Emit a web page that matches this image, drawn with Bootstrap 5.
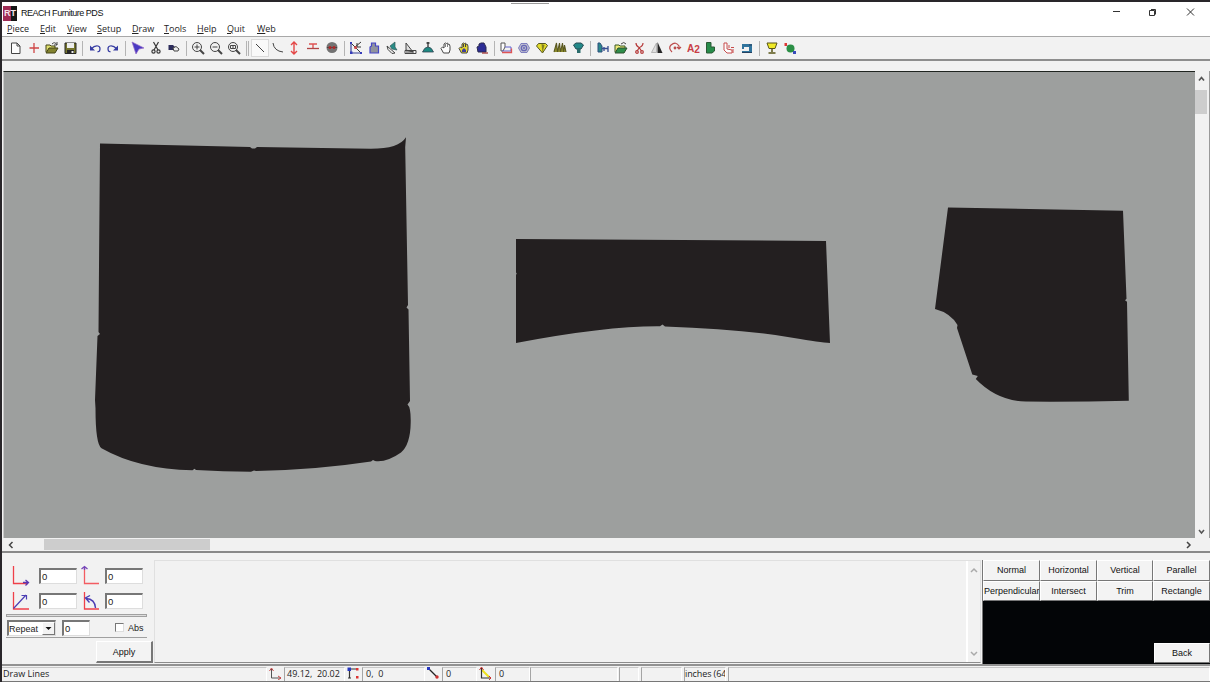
<!DOCTYPE html>
<html lang="en">
<head>
<meta charset="utf-8">
<title>REACH Furniture PDS</title>
<link href="https://cdn.jsdelivr.net/npm/bootstrap@5.3.0/dist/css/bootstrap.min.css" rel="stylesheet">
<style>
body{width:1210px;height:682px;overflow:hidden;background:#f2f2f2;font-family:"Liberation Sans",Arial,sans-serif;font-size:9px;line-height:12px;color:#222;white-space:nowrap}
svg{display:block;flex:none}
.app{height:682px;border-top:2px solid #29262a;border-left:2px solid #29262a}
.titlebar{height:21px;background:#fff;color:#111}
.logo{width:14px;height:15px;margin:2px 0 0 1px;background:linear-gradient(90deg,#a02c55 55%,#151515 55%);color:#f3e4ea;font:bold 9px/15px "Liberation Sans",sans-serif;text-align:center}
.app-name{font-size:9px;letter-spacing:-.48px;margin:1px 0 0 4px}
.menus{height:13px;background:#fff;font:9px/12px "Open Sans","Noto Sans",sans-serif;padding-left:5px;color:#252525}
.menus a{color:inherit;text-decoration:none}
.menus a::first-letter{text-decoration:underline}
.tools{height:25px;border-top:1px solid #a8a8a8;border-bottom:2px solid #8e8e8e;background:#f2f2f2;padding-left:5px}
.tools>svg{opacity:.9}
.sep::before{content:"";display:block;width:1px;height:15px;background:#b4b4b4;margin:auto}
.sep{flex:none}.w6{width:6px}.w7{width:7px}.w8{width:8px}
.w8::before{width:3px;border-left:1px solid #b4b4b4;border-right:1px solid #b4b4b4;background:none}
.down{background:#fafafa;outline:1px solid #d8d8d8;outline-offset:-1px}
.strip{height:10px}
.work{height:467px}
.canvas-box{width:1192px;margin-left:1px;border-top:1px solid #1f2420;background:#9d9f9e;border-left:1px solid #c9c9c9}
.vbar{width:15px;background:#f1f1f1;border-right:1px solid #999}
.vthumb{width:12px;height:24px;background:#cdcdcd;margin-top:1px}
.hbar{height:15px;border-bottom:2px solid #898989;background:#f1f1f1}
.hthumb{width:166px;height:11px;background:#cdcdcd}
.bottom{height:111px;padding-top:7px}
.coord{width:151px;padding-left:4px}
.field{height:16px;background:#fff;border:1px solid #ddd;border-top:2px solid #777;border-left:2px solid #777;padding-left:1px;font-size:9.5px;line-height:14px;width:38px}
.rule{height:3px;border:1px solid #a0a0a0;background:#ddd;width:141px}
.btn.face{border:1px solid #fff;border-right:1px solid #777;border-bottom:1px solid #777;border-radius:0;background:#f3f3f3;color:#111;font:9px/12px "Liberation Sans",sans-serif;padding:0;overflow:hidden}
.btn.apply{width:57px;height:22px;border-right:2px solid #777;border-bottom:2px solid #777}
.output{width:827px;height:103px;border:1px solid #e0e0e0;border-bottom:1px solid #8c8c8c;margin-left:1px}
.cmds{width:228px;height:104px;background:#030507;border-left:1px solid #777;margin-left:1px}
.cmds .face{width:57px;height:20.5px}
.cmds .back{width:56px;margin:auto 0 1px auto}
.cmds .grid4{display:grid;grid-template-columns:57px 57px 56px 57px}
.status{height:18px;border-top:2px solid #929292;border-bottom:1px solid #777;font:9px/12px "Open Sans","Noto Sans",sans-serif}
.pane{height:14px;border-left:1px solid #a5a5a5;border-top:1px solid #c8c8c8;border-right:1px solid #fff;overflow:hidden;flex:none;margin-top:1px;white-space:pre}
</style>
<script src="https://cdn.jsdelivr.net/npm/bootstrap@5.3.0/dist/js/bootstrap.bundle.min.js"></script>
</head>
<body>
<div class="app d-flex flex-column position-relative">
 <div class="position-absolute" style="left:509px;top:0;width:38px;height:2px;background:#fff;border-bottom:1px solid #999"></div>
 <header class="titlebar d-flex align-items-center flex-shrink-0">
  <div class="logo">RT</div><div class="app-name">REACH Furniture PDS</div>
  <svg class="ms-auto" width="100" height="20" fill="none" stroke="#333"><path d="M3 8.500h7"/><path d="M39.500 7.500h5v5h-5zM41 6.500h4.500v5"/><path d="M77 5.500l7 7M84 5.500l-7 7"/></svg>
 </header>
 <nav class="menus d-flex flex-shrink-0">
  <a class="d-block" style="width:33px">Piece</a><a class="d-block" style="width:27px">Edit</a><a class="d-block" style="width:30px">View</a><a class="d-block" style="width:35px">Setup</a><a class="d-block" style="width:32px">Draw</a><a class="d-block" style="width:33px">Tools</a><a class="d-block" style="width:30px">Help</a><a class="d-block" style="width:30px">Quit</a><a class="d-block">Web</a>
 </nav>
 <div class="tools d-flex align-items-center flex-shrink-0">
  <svg width="18" height="18"><path d="M4.500 4h5.500l3 3v7.500H4.500z" fill="#fff" stroke="#333"/><path d="M10 4v3h3" fill="none" stroke="#333"/></svg>
  <svg width="18" height="18"><path d="M9 4v10M4.500 9h9.500" stroke="#c33" stroke-width="1.300"/></svg>
  <svg width="18" height="18"><path d="M3 13V6h4l1 1h4v3" fill="#dede60" stroke="#333300"/><path d="M3 14l3-5h9l-3 5z" fill="#77771a" stroke="#333300"/><path d="M9 5q3-3 5 1M14 3v3h-3" fill="none" stroke="#333"/></svg>
  <svg width="18" height="18"><path d="M4 4h11v10.500H4z" fill="#686817" stroke="#111"/><path d="M6 4h7v5H6z" fill="#eee"/><path d="M6 11h7v4H6z" fill="#111"/><path d="M10.500 12h2v2h-2z" fill="#eee"/></svg>
  <i class="sep w7"></i>
  <svg width="18" height="18"><path d="M5 10q4-4 7-3 3 1 1.500 5l-2 1" fill="none" stroke="#22289a" stroke-width="1.300"/><path d="M4 6.500v5h5z" fill="#22289a"/></svg>
  <svg width="18" height="18"><path d="M13 10q-4-4-7-3-3 1-1.500 5l2 1" fill="none" stroke="#22289a" stroke-width="1.300"/><path d="M14 6.500v5H9z" fill="#22289a"/></svg>
  <i class="sep w7"></i>
  <svg width="18" height="18"><path d="M3 3l12 6-5 1-3 5z" fill="#3827bd" stroke="#8b5bc4" stroke-width=".7"/></svg>
  <svg width="18" height="18" fill="none" stroke="#252525" stroke-width="1.200"><path d="M6.500 3l4.500 8M11.500 3L7 11"/><circle cx="6.500" cy="12.500" r="1.600"/><circle cx="11.500" cy="12.500" r="1.600"/></svg>
  <svg width="18" height="18"><path d="M3.500 6H8l2 2v3H3.500z" fill="#17174b"/><path d="M8 9l3-1.500 3 2.500-1 2H9z" fill="#eee" stroke="#333"/></svg>
  <i class="sep w6"></i>
  <svg width="18" height="18" fill="none" stroke="#333"><circle cx="8" cy="8" r="4.500"/><path d="M5.500 8h5M8 5.500v5"/><path d="M11 11l4 4" stroke-width="2"/></svg>
  <svg width="18" height="18" fill="none" stroke="#333"><circle cx="8" cy="8" r="4.500"/><path d="M5.500 8h5"/><path d="M11 11l4 4" stroke-width="2"/></svg>
  <svg width="18" height="18" fill="none" stroke="#333"><circle cx="8" cy="8" r="4.500"/><path d="M5.500 6.500h5v3h-5zM7 8h2"/><path d="M11 11l4 4" stroke-width="2"/></svg>
  <i class="sep w8"></i>
  <svg class="down" width="18" height="18"><path d="M5 5l8 8" stroke="#333"/></svg>
  <svg width="18" height="18"><path d="M4 4q1 8 10 9" fill="none" stroke="#333"/></svg>
  <svg width="18" height="18" fill="none" stroke="#e33535" stroke-width="1.400"><path d="M7 3v12M4 6l3-3 3 3M4 12l3 3 3-3"/></svg>
  <svg width="18" height="18" fill="none"><path d="M4 5h8M8 5v4" stroke="#d44" stroke-width="1.400"/><path d="M2 9.500h12" stroke="#a33" stroke-width="1.300"/></svg>
  <svg width="18" height="18"><circle cx="9" cy="8.500" r="5.500" fill="#666"/><path d="M4 8.500h10" stroke="#333"/><circle cx="7" cy="8.500" r="1.500" fill="#a11"/><circle cx="11" cy="8.500" r="1.500" fill="#a11"/></svg>
  <i class="sep w6"></i>
  <svg width="18" height="18" fill="none"><path d="M4 3v11h11" stroke="#27318e" stroke-width="1.200"/><path d="M4 4l10 10M8 8l6-5M10 4v4h4" stroke="#222"/><circle cx="8.500" cy="8.500" r="1.500" fill="#c33"/><path d="M3 12.500h2.500V15H3zM13 13h2v2h-2zM3 3h2v2H3z" fill="#2229b5"/></svg>
  <svg width="18" height="18"><path d="M5 14V8l1.500-1V4h4v3h3v7z" fill="#868996" stroke="#3434c2" stroke-width="1.200"/></svg>
  <svg width="18" height="18"><path d="M4 7l8 7-3 .5-4-4z" fill="#eee" stroke="#333"/><path d="M7 7l5-4v5l2 3-5-1z" fill="#13827c" stroke="#204b49" stroke-width=".7"/></svg>
  <svg width="18" height="18" fill="none" stroke="#333"><path d="M5 4v7l7 2z" fill="#ddd"/><path d="M4 11.500h11v3H4zM6 12v2M8 12v2M10 12v2M12 12v2"/></svg>
  <svg width="18" height="18"><path d="M3.500 13q2-5 5.500-5t5.500 5z" fill="#087f76" stroke="#234" stroke-width=".8"/><path d="M9 3v5M7.500 4h3" stroke="#222" stroke-width="1.300"/></svg>
  <svg width="18" height="18"><path d="M6.500 14L4 9.500 5.500 8 7 9V5l1.500-1 1 .5 1-.5 1 1.500h1l.5 2V11L12 14z" fill="#fff" stroke="#333"/><path d="M8.500 5v3M10.500 5v3" stroke="#777"/></svg>
  <svg width="18" height="18"><path d="M6.500 14L4 9.500 5.500 8 7 9V5l1.500-1 1 .5 1-.5 1 1.500h1l.5 2V11L12 14z" fill="#e3d51b" stroke="#333"/><path d="M8.500 5v3M10.500 5v3" stroke="#333"/><path d="M7 11l2-2 2 2v2H7z" fill="#2b2b92"/></svg>
  <svg width="18" height="18"><path d="M5 13l-1-5 2-1V5l2-1h3l2 4v5z" fill="#17178c" stroke="#15153f"/><path d="M9 14h6" stroke="#922" stroke-width="1.300"/></svg>
  <i class="sep w6"></i>
  <svg width="18" height="18"><path d="M4 4h4v4L6 12H4z" fill="#fff" stroke="#444"/><path d="M8 8h6v4H5" stroke="#55c" fill="none"/><path d="M5 13.500h9.500v-4" fill="none" stroke="#d44" stroke-width="1.300"/></svg>
  <svg width="18" height="18" fill="none" stroke="#5a5ab0"><path d="M6 4.500h6l2.500 4.500-2.500 4.500H6L3.500 9z" fill="#bbc" stroke-width=".8"/><circle cx="9" cy="9" r="2.700" stroke-width="1.300"/><circle cx="9" cy="9" r=".8"/></svg>
  <svg width="18" height="18"><path d="M3.500 7l2-2.500h7l2 2L9.500 14z" fill="#e1d916" stroke="#45450e"/><path d="M8.500 5l1 9 2-8z" fill="#77750b"/></svg>
  <svg width="18" height="18"><path d="M3 13l2.500-9 1 9 2-9 1 9 2-9 1 9 1-7 1.500 7" fill="#85851a" stroke="#4a480c" stroke-width="1.100"/></svg>
  <svg width="18" height="18"><path d="M4.500 6l2.500-2h5l2.500 2L12 10H7z" fill="#0c7d7d" stroke="#143d45"/><path d="M8 10h3.500v4H8z" fill="#165e5e"/></svg>
  <i class="sep w7"></i>
  <svg width="18" height="18"><path d="M4 4h2l2 3v6H4z" fill="#167d80" stroke="#193e70"/><path d="M8 9.500h6M10 8v4M14 7v6" stroke="#223b86" stroke-width="1.300"/></svg>
  <svg width="18" height="18"><path d="M3 13V6h4l1 1h5v3" fill="#eee96a" stroke="#294b11"/><path d="M3 14l3-5h9l-3 5z" fill="#19843a" stroke="#193e18"/><path d="M9 5q3-3 5 0" fill="none" stroke="#333"/></svg>
  <svg width="18" height="18" fill="none" stroke="#b02626" stroke-width="1.200"><path d="M6 4q0 3 3 4.500L11.500 12M13 4q0 3-3.500 4.500L7 12"/><circle cx="7" cy="13" r="1.300"/><circle cx="12" cy="13" r="1.300"/></svg>
  <svg width="18" height="18"><path d="M8.500 4v9.500h-5z" fill="#ddd" stroke="#999" stroke-width=".7"/><path d="M9.500 3v11h5z" fill="#111"/></svg>
  <svg width="18" height="18" fill="none" stroke="#b63737" stroke-width="1.200"><path d="M6 13Q2 9 5 6q5-4 8 1v3M11 8l2 2 2-2"/><circle cx="9" cy="9" r=".8" fill="#222"/></svg>
  <svg width="18" height="18"><text x="3" y="12.500" font-size="11" font-weight="bold" fill="#c52b32" textLength="13" lengthAdjust="spacingAndGlyphs">A<tspan dy="1.5">2</tspan></text></svg>
  <svg width="18" height="18"><path d="M4.500 3.500H9V8h3.500v4L10 14H4.500z" fill="#128238" stroke="#174921"/></svg>
  <svg width="18" height="18" fill="none" stroke="#c23b3b"><path d="M4 4h3v6l5 1v3H7l-3-3z" fill="#fff"/><path d="M9 6v3M11 8.500h3M13 10v4"/></svg>
  <svg width="18" height="18"><path d="M4 5h10v8H4v-1h7V8H6v2H4z" fill="#1c6794"/><path d="M4 13.500h10M11 6h3" stroke="#112e51"/></svg>
  <i class="sep w7"></i>
  <svg width="18" height="18"><path d="M4 4h10l-2 5.500H6z" fill="#efe912" stroke="#484500"/><path d="M9 10v3M5.500 14h7" stroke="#484500" stroke-width="1.500"/></svg>
  <svg width="18" height="18"><path d="M4 5l10 9" stroke="#222"/><circle cx="9.500" cy="9.500" r="4" fill="#168534"/><path d="M3.500 4H6v3H3.500z" fill="#d22"/><path d="M12 12h3v3h-3z" fill="#243bb6"/></svg>
 </div>
 <div class="strip flex-shrink-0"></div>
 <main class="work d-flex flex-shrink-0">
  <div class="canvas-box flex-shrink-0">
   <svg width="1191" height="466" viewBox="4 72 1191 466" fill="#231f20">
    <path d="M100 143.500L250 147l2 1.500h3l2-1.500 114 1.800q28 0 35-11.500l-.8 10L408 305l-1.500 2.500 2 2L410 401l-2.500 3.500q3.500 3 3.200 18-.3 22-9.700 30-14 10-26 8.500l-2-1-2 1.500Q315 470 256 471l-2-.5-3 1.200q-28 0-55-1.700l-1.500-1.200-2 1.500q-54-1-91-22-6-4-6-40L95 400l2.500-64 2.500-2-1.500-2 .5-65z"/>
    <path d="M516 239l310 2 4 102q-10-.5-36-5-52-9-129-11.500l-2.500-2-2.500 1.800q-53-.5-144 16.700V275l.7-1.500-.7-1z"/>
    <path d="M948 207.500l175 3.300 3.500 88-1.500 1.500 2 1.500 1.800 99q-54 1.200-103 .8-29-.8-50-22.600l2-3-5.500-1.500L957 328l.5-3q-7-12-22.500-16z"/>
   </svg>
  </div>
  <div class="vbar d-flex flex-column flex-shrink-0"><svg width="12" height="14" class="mt-1" fill="none" stroke="#555" stroke-width="1.700"><path d="M4 5.500L6.500 2.500l2.500 3"/></svg><div class="vthumb"></div><svg width="12" height="14" class="mt-auto" fill="none" stroke="#555" stroke-width="1.500"><path d="M4 6L6.500 9 9 6"/></svg></div>
 </main>
 <div class="hbar d-flex align-items-center flex-shrink-0">
  <svg width="42" height="12" fill="none" stroke="#444" stroke-width="1.500"><path d="M10.500 3L7.500 6l3 3"/></svg><div class="hthumb"></div><svg class="ms-auto" width="27" height="12" fill="none" stroke="#444" stroke-width="1.500"><path d="M4 3l3 3-3 3"/></svg>
 </div>
 <section class="bottom d-flex flex-shrink-0">
  <div class="coord flex-shrink-0">
   <div class="d-flex align-items-center" style="height:26px;padding-top:3px;margin-top:1px">
    <svg width="33" height="22" fill="none"><path d="M7.500 1v17.500H22" stroke="#ef4049" stroke-width="1.300"/><path d="M17 17.500h5M19.500 15l3 2.500-3 3" stroke="#5b38b1" stroke-width="1.300"/></svg><div class="field">0</div>
    <svg width="28" height="22" fill="none"><path d="M7.500 3v15.500H22" stroke="#f35c62" stroke-width="1.300"/><path d="M7.500 5V1.500M4.500 4L7.500 1.500 10.500 4" stroke="#7546b9" stroke-width="1.300"/></svg><div class="field">0</div>
   </div>
   <div class="d-flex align-items-center" style="height:27px;padding-top:1px">
    <svg width="33" height="20" fill="none"><path d="M7.500 1v17H23" stroke="#ef4049" stroke-width="1.300"/><path d="M7.500 17.500L20 4M15.500 4.500h5v4" stroke="#4c3eb4" stroke-width="1.200"/></svg><div class="field">0</div>
    <svg width="28" height="20" fill="none"><path d="M7.500 1v17H22" stroke="#ef4049" stroke-width="1.300"/><path d="M18.500 17Q18 8 9 7.500M13 4.500L8.500 7l4 4.500" stroke="#4c3eb4" stroke-width="1.400"/></svg><div class="field">0</div>
   </div>
   <div class="rule"></div>
   <div class="d-flex align-items-center" style="height:20px;padding:1px 0 0 1px">
    <div class="field d-flex" style="width:49px;font-size:9px;padding-left:0">Repeat<span class="face btn ms-auto" style="width:13px;height:13px;line-height:9px"><svg width="11" height="11"><path d="M2.500 4h6L5.500 7z" fill="#111"/></svg></span></div>
    <div class="field" style="width:28px;margin-left:6px">0</div>
    <div style="width:9px;height:9px;margin:0 4px 1px 25px;border:1px solid #ddd;border-top-color:#777;border-left-color:#777;background:#fff"></div><span>Abs</span>
   </div>
   <div style="height:1px;background:#a0a0a0;width:141px"></div>
   <button class="btn face apply d-block ms-auto" style="margin-top:3px">Apply</button>
  </div>
  <div class="output d-flex flex-shrink-0">
   <div class="ms-auto d-flex flex-column justify-content-between" style="border-left:2px solid #fff;width:14px;padding:3px 0 2px"><svg width="12" height="12" fill="none" stroke="#aaa" stroke-width="1.500"><path d="M3 8l3-3 3 3"/></svg><svg width="12" height="12" fill="none" stroke="#aaa" stroke-width="1.500"><path d="M3 4l3 3 3-3"/></svg></div>
  </div>
  <div class="cmds flex-shrink-0 d-flex flex-column">
   <div class="grid4">
    <button class="btn face w-100">Normal</button><button class="btn face w-100">Horizontal</button><button class="btn face w-100">Vertical</button><button class="btn face w-100">Parallel</button>
    <button class="btn face w-100">Perpendicular</button><button class="btn face w-100">Intersect</button><button class="btn face w-100">Trim</button><button class="btn face w-100">Rectangle</button>
   </div>
   <button class="btn face back">Back</button>
  </div>
 </section>
 <footer class="status d-flex flex-shrink-0">
  <div class="pane" style="width:265px;border-left:0;padding-left:1px">Draw Lines</div>
  <svg width="17" height="14" fill="none"><path d="M4.500 3v9H14" stroke="#555"/><path d="M2.500 5l2-3 2 3M11 10l3 2-3 2" stroke="#c44"/></svg>
  <div class="pane" style="width:61px;padding-left:2px">49.12,  20.02</div>
  <svg width="17" height="14" fill="none"><path d="M4.500 3v9M4 3h8M3 12h3" stroke="#333" stroke-width="1.200"/><path d="M2.500 1.500H6V5H2.500z" fill="#2838c0"/><path d="M11 2h2.500v2.500H11zM11 10h2.500v2.500H11z" fill="#d33"/></svg>
  <div class="pane" style="width:63px;padding-left:3px">0,  0</div>
  <svg width="17" height="14"><path d="M4 3l8 8" stroke="#222" stroke-width="1.200"/><path d="M2 1h3v3H2z" fill="#2838c0"/><circle cx="12" cy="11" r="1.700" fill="#c33"/></svg>
  <div class="pane" style="width:35px;padding-left:3px">0</div>
  <svg width="18" height="14" fill="none"><path d="M5 4l7 7" stroke="#eee21c" stroke-width="2"/><path d="M4.500 2v10H14" stroke="#333" stroke-width="1.200"/><path d="M2.500 4l2-3 2 3M12 10l2 2-2 2" stroke="#c33"/></svg>
  <div class="pane" style="width:35px;padding-left:3px">0</div>
  <div class="pane" style="width:88px"></div><div class="pane" style="width:20px;margin-left:1px"></div><div class="pane" style="width:41px;margin-left:2px"></div><div class="pane" style="width:42px;margin-left:2px;letter-spacing:-.1px">inches (64</div><div class="pane flex-fill" style="margin-left:2px"></div>
 </footer>
</div>
</body>
</html>
